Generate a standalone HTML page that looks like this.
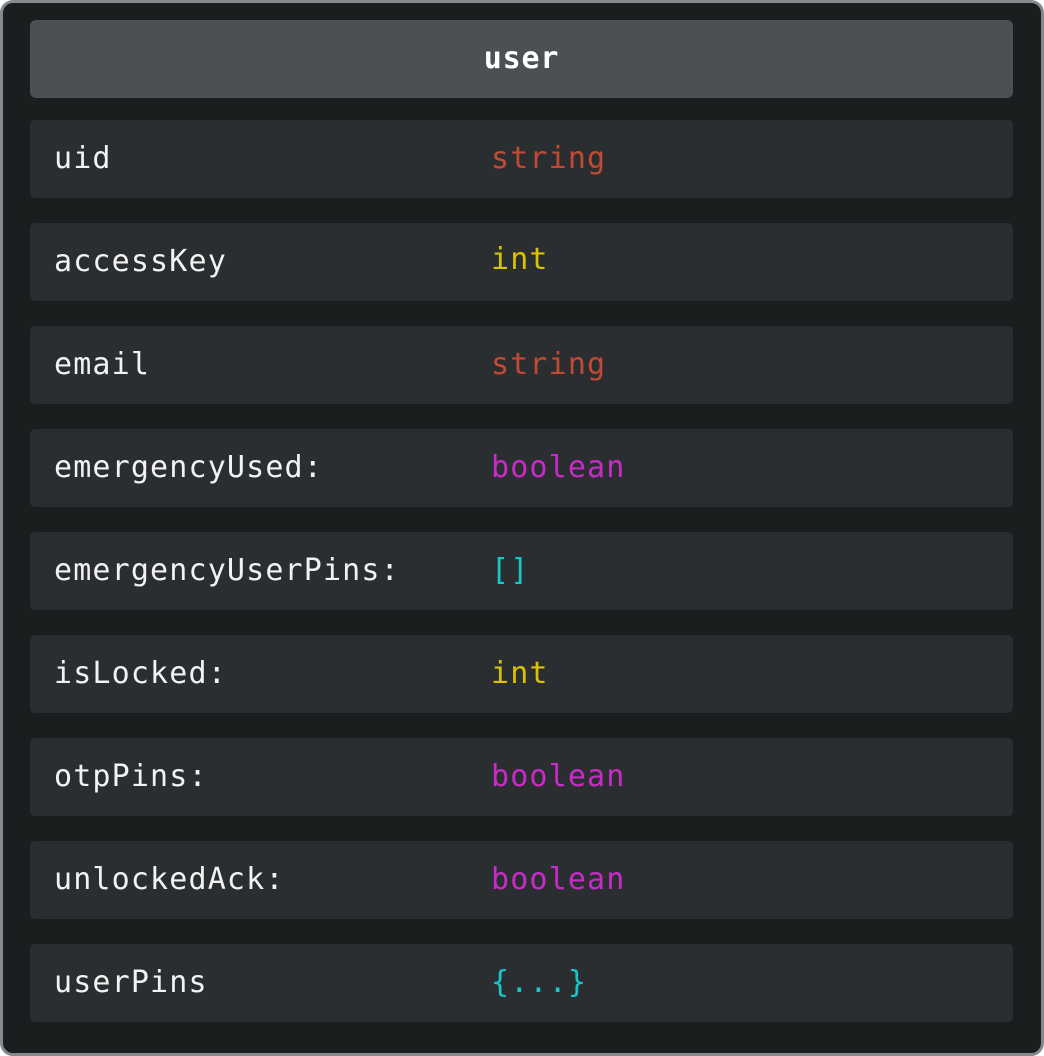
<!DOCTYPE html>
<html><head><style>
html,body{margin:0;padding:0;background:#fff;}
body{width:1044px;height:1056px;position:relative;overflow:hidden;font-family:"DejaVu Sans Mono","Liberation Mono",monospace;}
.outer{position:absolute;left:0;top:0;width:1038px;height:1050px;border:3px solid #85898c;border-radius:13px;background:#1b1e1f;}
.hdr{position:absolute;left:27px;top:17px;width:983px;height:78px;background:#4b5055;border-radius:6px;color:#fff;font-weight:bold;font-size:30px;line-height:78px;text-align:center;letter-spacing:0.8px;}
.row{position:absolute;left:27px;width:983px;height:78px;background:#2b2e30;border-radius:5px;font-size:30px;line-height:78px;color:#f2f2f2;}
.row .k{position:absolute;left:24px;top:0;letter-spacing:1.15px;}
.row .t{position:absolute;left:461px;top:0;letter-spacing:1.15px;}
.s{color:#c24a35}.i{color:#d9c300}.b{color:#c82bc8}.c{color:#17c8c8}
</style></head><body>
<div class="outer">
<div class="hdr">user</div>
<div class="row" style="top:117px"><span class="k">uid</span><span class="t s">string</span></div>
<div class="row" style="top:220px"><span class="k">accessKey</span><span class="t i" style="top:-2px">int</span></div>
<div class="row" style="top:323px"><span class="k">email</span><span class="t s">string</span></div>
<div class="row" style="top:426px"><span class="k">emergencyUsed:</span><span class="t b">boolean</span></div>
<div class="row" style="top:529px"><span class="k">emergencyUserPins:</span><span class="t c">[]</span></div>
<div class="row" style="top:632px"><span class="k">isLocked:</span><span class="t i">int</span></div>
<div class="row" style="top:735px"><span class="k">otpPins:</span><span class="t b">boolean</span></div>
<div class="row" style="top:838px"><span class="k">unlockedAck:</span><span class="t b">boolean</span></div>
<div class="row" style="top:941px"><span class="k">userPins</span><span class="t c">{...}</span></div>
</div>
</body></html>
